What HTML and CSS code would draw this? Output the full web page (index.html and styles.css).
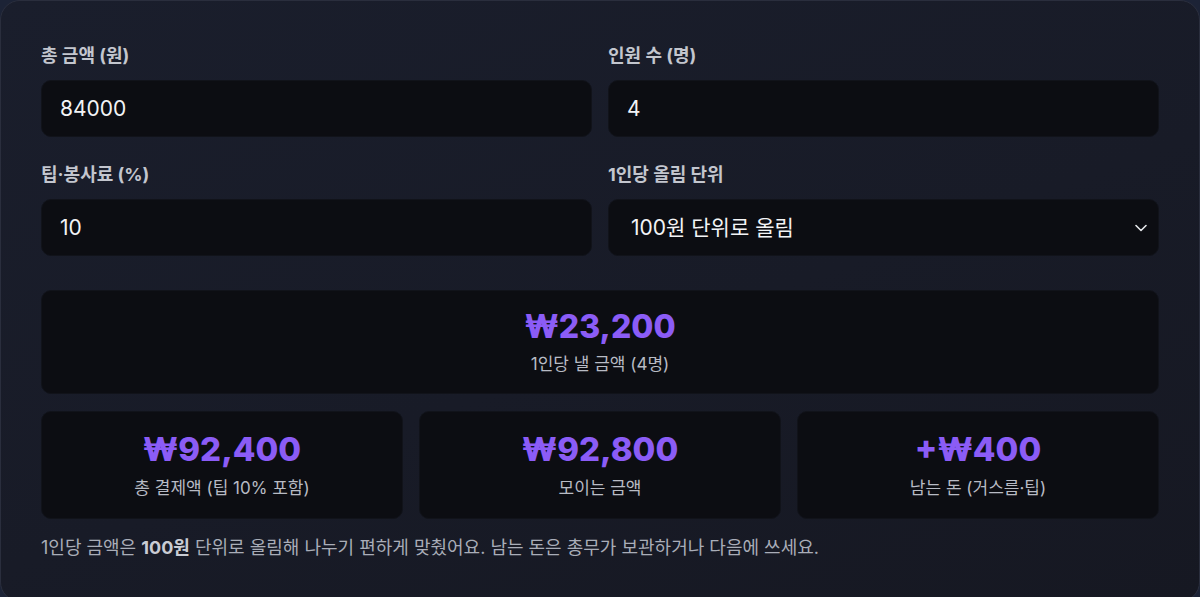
FILE: index.html
```html
<!DOCTYPE html>
<html lang="ko">
<head>
  <meta charset="UTF-8" />
  <meta name="viewport" content="width=device-width, initial-scale=1.0"/>
  <title>더치페이 계산기</title>
  <link rel="stylesheet" href="styles.css">
</head>
<body>

  <div class="card">
    <div class="fields">
      <label class="field">
        <span class="label">총 금액 (원)</span>
        <input id="total" type="number" value="84000">
      </label>
      <label class="field">
        <span class="label">인원 수 (명)</span>
        <input id="people" type="number" value="4">
      </label>
      <label class="field">
        <span class="label">팁·봉사료 (%)</span>
        <input id="tip" type="number" value="10">
      </label>
      <label class="field">
        <span class="label">1인당 올림 단위</span>
        <span class="select-wrap">
          <select id="unit">
            <option value="1">1원 단위 (올림 없음)</option>
            <option value="10">10원 단위로 올림</option>
            <option value="100" selected>100원 단위로 올림</option>
            <option value="1000">1000원 단위로 올림</option>
          </select>
          <svg class="chevron" width="12" height="8" viewBox="0 0 12 8"><path d="M1 1.5l5 5 5-5" fill="none" stroke="#e5e7eb" stroke-width="1.6" stroke-linecap="round" stroke-linejoin="round"/></svg>
        </span>
      </label>
    </div>

    <div class="result main">
      <div class="amount" id="perPerson">₩23,200</div>
      <div class="caption" id="perPersonLabel">1인당 낼 금액 (4명)</div>
    </div>

    <div class="stats">
      <div class="result">
        <div class="amount" id="grand">₩92,400</div>
        <div class="caption" id="grandLabel">총 결제액 (팁 10% 포함)</div>
      </div>
      <div class="result">
        <div class="amount" id="collected">₩92,800</div>
        <div class="caption">모이는 금액</div>
      </div>
      <div class="result">
        <div class="amount" id="left">+₩400</div>
        <div class="caption">남는 돈 (거스름·팁)</div>
      </div>
    </div>

    <p class="note">1인당 금액은 <b id="unitText">100원</b> 단위로 올림해 나누기 편하게 맞췄어요. 남는 돈은 총무가 보관하거나 다음에 쓰세요.</p>
  </div>

  <script>
    const $ = id => document.getElementById(id);
    const won = n => '₩' + Math.round(n).toLocaleString('ko-KR');

    function calc() {
      const total = Number($('total').value) || 0;
      const people = Math.max(1, Number($('people').value) || 1);
      const tip = Number($('tip').value) || 0;
      const unit = Number($('unit').value);

      // tip is applied as a multiplier; per-person share is rounded up to the unit
      const grand = total * (1 + tip / 100);
      const per = Math.ceil(grand / people / unit) * unit;
      const collected = per * people;

      $('perPerson').textContent = won(per);
      $('perPersonLabel').textContent = `1인당 낼 금액 (${people}명)`;
      $('grand').textContent = won(grand);
      $('grandLabel').textContent = `총 결제액 (팁 ${tip}% 포함)`;
      $('collected').textContent = won(collected);
      $('left').textContent = '+' + won(collected - grand);
      $('unitText').textContent = unit + '원';
    }

    ['total', 'people', 'tip', 'unit'].forEach(id => $(id).addEventListener('input', calc));
    calc();
  </script>

</body>
</html>
```

FILE: styles.css
```css
* {
  box-sizing: border-box;
}

body {
  margin: 0;
  background: #1c2336;
  font-family: "Inter", "Noto Sans CJK KR", sans-serif;
  color: #e5e7eb;
}

.card {
  min-height: 597px;
  padding: 40px;
  border: 1px solid #2a2e3d;
  border-radius: 20px;
  background: linear-gradient(160deg, #1a1e2c 0%, #181b27 55%, #161822 100%);
}

.fields {
  display: grid;
  grid-template-columns: 1fr 1fr;
  column-gap: 16px;
  row-gap: 23px;
}

.field {
  display: flex;
  flex-direction: column;
  gap: 12px;
}

.label {
  font-size: 18px;
  font-weight: 700;
  color: #c3c6ce;
  line-height: 24px;
  margin-top: 3px;
}

input,
select {
  width: 100%;
  height: 57px;
  padding: 0 18px;
  border: 1px solid #11131a;
  border-radius: 10px;
  background: #0c0d12;
  color: #f3f4f6;
  font: inherit;
  font-size: 21px;
  outline: none;
  -webkit-appearance: none;
  appearance: none;
}

select {
  padding: 0 22px;
}

input::-webkit-inner-spin-button,
input::-webkit-outer-spin-button {
  -webkit-appearance: none;
  margin: 0;
}

.select-wrap {
  position: relative;
  display: block;
}

.chevron {
  position: absolute;
  right: 12px;
  top: 25px;
  pointer-events: none;
}

.result {
  display: flex;
  flex-direction: column;
  align-items: center;
  justify-content: center;
  gap: 6px;
  border: 1px solid #11131a;
  border-radius: 10px;
  background: #0c0d12;
}

.result.main {
  margin-top: 34px;
  height: 104px;
}

.amount {
  font-size: 32px;
  font-weight: 800;
  color: #8b5cf6;
  line-height: 38px;
}

.caption {
  font-size: 17px;
  color: #b8bbc4;
  line-height: 24px;
}

.stats {
  display: grid;
  grid-template-columns: repeat(3, 1fr);
  gap: 16px;
  margin-top: 17px;
}

.stats .result {
  height: 108px;
  gap: 8px;
}

.stats .amount {
  font-size: 33px;
}

.note {
  margin: 16px 0 0;
  font-size: 18px;
  line-height: 26px;
  color: #a9adb8;
}

.note b {
  color: #c9ccd4;
}
```
